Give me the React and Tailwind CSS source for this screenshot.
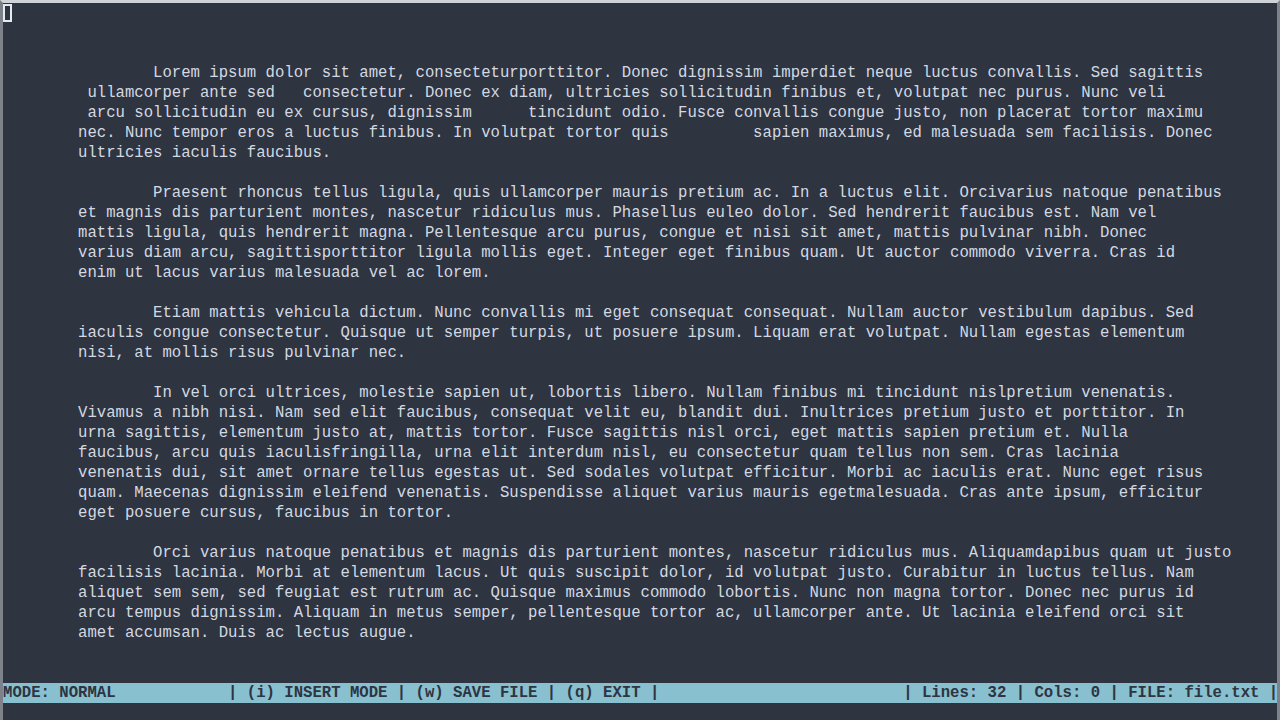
import React from 'react';

const body = [
  '',
  '',
  '                Lorem ipsum dolor sit amet, consecteturporttitor. Donec dignissim imperdiet neque luctus convallis. Sed sagittis',
  '         ullamcorper ante sed   consectetur. Donec ex diam, ultricies sollicitudin finibus et, volutpat nec purus. Nunc veli',
  '         arcu sollicitudin eu ex cursus, dignissim      tincidunt odio. Fusce convallis congue justo, non placerat tortor maximu',
  '        nec. Nunc tempor eros a luctus finibus. In volutpat tortor quis         sapien maximus, ed malesuada sem facilisis. Donec',
  '        ultricies iaculis faucibus.',
  '',
  '                Praesent rhoncus tellus ligula, quis ullamcorper mauris pretium ac. In a luctus elit. Orcivarius natoque penatibus',
  '        et magnis dis parturient montes, nascetur ridiculus mus. Phasellus euleo dolor. Sed hendrerit faucibus est. Nam vel',
  '        mattis ligula, quis hendrerit magna. Pellentesque arcu purus, congue et nisi sit amet, mattis pulvinar nibh. Donec',
  '        varius diam arcu, sagittisporttitor ligula mollis eget. Integer eget finibus quam. Ut auctor commodo viverra. Cras id',
  '        enim ut lacus varius malesuada vel ac lorem.',
  '',
  '                Etiam mattis vehicula dictum. Nunc convallis mi eget consequat consequat. Nullam auctor vestibulum dapibus. Sed',
  '        iaculis congue consectetur. Quisque ut semper turpis, ut posuere ipsum. Liquam erat volutpat. Nullam egestas elementum',
  '        nisi, at mollis risus pulvinar nec.',
  '',
  '                In vel orci ultrices, molestie sapien ut, lobortis libero. Nullam finibus mi tincidunt nislpretium venenatis.',
  '        Vivamus a nibh nisi. Nam sed elit faucibus, consequat velit eu, blandit dui. Inultrices pretium justo et porttitor. In',
  '        urna sagittis, elementum justo at, mattis tortor. Fusce sagittis nisl orci, eget mattis sapien pretium et. Nulla',
  '        faucibus, arcu quis iaculisfringilla, urna elit interdum nisl, eu consectetur quam tellus non sem. Cras lacinia',
  '        venenatis dui, sit amet ornare tellus egestas ut. Sed sodales volutpat efficitur. Morbi ac iaculis erat. Nunc eget risus',
  '        quam. Maecenas dignissim eleifend venenatis. Suspendisse aliquet varius mauris egetmalesuada. Cras ante ipsum, efficitur',
  '        eget posuere cursus, faucibus in tortor.',
  '',
  '                Orci varius natoque penatibus et magnis dis parturient montes, nascetur ridiculus mus. Aliquamdapibus quam ut justo',
  '        facilisis lacinia. Morbi at elementum lacus. Ut quis suscipit dolor, id volutpat justo. Curabitur in luctus tellus. Nam',
  '        aliquet sem sem, sed feugiat est rutrum ac. Quisque maximus commodo lobortis. Nunc non magna tortor. Donec nec purus id',
  '        arcu tempus dignissim. Aliquam in metus semper, pellentesque tortor ac, ullamcorper ante. Ut lacinia eleifend orci sit',
  '        amet accumsan. Duis ac lectus augue.',
  '',
  '',
];

const status =
  'MODE: NORMAL            | (i) INSERT MODE | (w) SAVE FILE | (q) EXIT |                          | Lines: 32 | Cols: 0 | FILE: file.txt |';

export default function App() {
  return (
    <div className="h-screen w-full overflow-hidden bg-[#2e3440] border-t-[3px] border-x-[3px] border-t-[#cfd2d7] border-x-[#7c818a] font-['Liberation_Mono',monospace] text-[15.63px] leading-5 flex flex-col">
      {/* editor buffer */}
      <div className="text-[#d3d9e3]">
        <div className="h-5 flex items-center">
          <span className="inline-block w-[9px] h-[18px] border-2 border-[#e5e9f0]" />
        </div>
        {body.map((line, i) => (
          <div key={i} className="h-5 whitespace-pre">
            {line}
          </div>
        ))}
      </div>

      {/* status line */}
      <div className="h-5 bg-[#88c0d0] text-[#2e3440] font-bold whitespace-pre">
        {status}
      </div>
    </div>
  );
}
